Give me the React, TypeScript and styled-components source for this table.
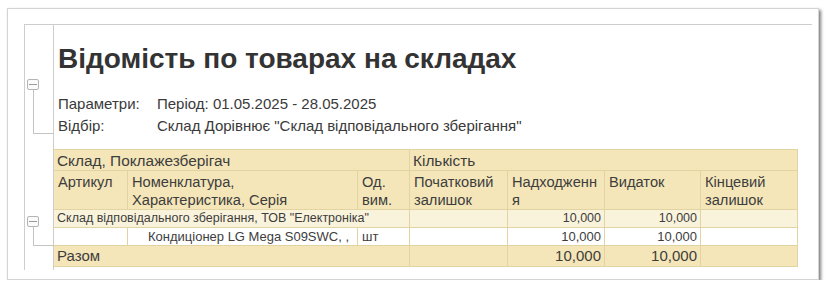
import React from "react";
import styled, { createGlobalStyle } from "styled-components";

const Global = createGlobalStyle`
  html, body { margin: 0; padding: 0; background: #ffffff; }
  body { font-family: "Liberation Sans", Arial, sans-serif; color: #3a3a3a; }
`;

const Card = styled.div`
  box-sizing: border-box;
  margin: 8px 0 0 7px;
  width: 812px;
  height: 272px;
  background: #fff;
  border: 1px solid #d4d4d4;
  box-shadow: 2px 2px 3px rgba(0, 0, 0, 0.5);
  padding: 15px 6px 9px 16px;
`;

const Sheet = styled.div`
  display: grid;
  grid-template-columns: 29px 74px 230px 52px 98px 97px 96px 97px 1fr;
  grid-template-rows: 54px 70px 22px 39px 18px 18px 21px 1fr;
  height: 100%;
  border-top: 1px solid #cdcdcd;
  border-left: 1px solid #cdcdcd;
  box-sizing: border-box;
`;

const GutterLine = styled.div`
  grid-column: 1;
  grid-row: 1 / -1;
  border-right: 1px solid #cdcdcd;
`;

const Tree = styled.div<{ $row: string; $top: number; $bottom: number }>`
  grid-column: 1;
  grid-row: ${(p) => p.$row};
  display: flex;
  flex-direction: column;
  padding: ${(p) => p.$top}px 0 ${(p) => p.$bottom}px 2px;
`;

const Toggle = styled.div`
  box-sizing: border-box;
  width: 12px;
  height: 11px;
  border: 1px solid #b4b4b4;
  border-radius: 2px;
  background: #fbfbfb;
  display: flex;
  align-items: center;
  justify-content: center;
  &::after {
    content: "";
    width: 8px;
    height: 1px;
    background: #9a9a9a;
  }
`;

const Stem = styled.div`
  flex: 1;
  margin-left: 6px;
  border-left: 1px solid #c4c4c4;
  border-bottom: 1px solid #c4c4c4;
`;

const Title = styled.h1`
  grid-column: 2 / -1;
  grid-row: 1;
  margin: 0;
  padding: 19px 0 0 4px;
  font-size: 28px;
  line-height: 30px;
  font-weight: bold;
  color: #333333;
  white-space: nowrap;
`;

const Params = styled.div`
  grid-column: 2 / -1;
  grid-row: 2;
  padding: 14px 0 0 4px;
`;

const ParamRow = styled.div`
  display: grid;
  grid-template-columns: 99px 1fr;
  height: 22px;
  line-height: 22px;
  font-size: 15px;
  color: #3a3a3a;
  white-space: nowrap;
`;

type Tone = "head" | "subhead" | "group" | "item" | "total";

const bgFor: Record<Tone, string> = {
  head: "#f4e6b9",
  subhead: "#f4e6b9",
  group: "#faf3dc",
  item: "#ffffff",
  total: "#f4e6b9",
};

const fontFor: Record<Tone, string> = {
  head: "15.4px",
  subhead: "14.67px",
  group: "12.5px",
  item: "13px",
  total: "15px",
};

const lineFor: Record<Tone, number> = {
  head: 17,
  subhead: 18,
  group: 17,
  item: 17,
  total: 20,
};

const Cell = styled.div<{
  $tone: Tone;
  $span?: number;
  $right?: boolean;
  $top?: boolean;
  $indent?: number;
}>`
  box-sizing: border-box;
  grid-column: span ${(p) => p.$span ?? 1};
  background: ${(p) => bgFor[p.$tone]};
  border-right: 1px solid #e2d4a2;
  border-bottom: 1px solid #e2d4a2;
  border-top: ${(p) => (p.$top ? "1px solid #e2d4a2" : "none")};
  font-size: ${(p) => fontFor[p.$tone]};
  line-height: ${(p) => lineFor[p.$tone]}px;
  padding: ${(p) => (p.$tone === "head" || p.$tone === "subhead" ? "2px" : "0")}
    ${(p) => (p.$right ? 3 : 0)}px 0 ${(p) => (p.$right ? 0 : p.$indent ?? 3)}px;
  text-align: ${(p) => (p.$right ? "right" : "left")};
  color: #3d3d3d;
  white-space: nowrap;
`;

const Filler = styled.div`
  grid-column: 9;
`;

export default function App() {
  return (
    <>
      <Global />
      <Card>
        <Sheet>
          <GutterLine />
          <Title>Відомість по товарах на складах</Title>

          <Tree $row="2" $top={0} $bottom={15}>
            <Toggle />
            <Stem />
          </Tree>
          <Params>
            <ParamRow>
              <span>Параметри:</span>
              <span>Період: 01.05.2025 - 28.05.2025</span>
            </ParamRow>
            <ParamRow>
              <span>Відбір:</span>
              <span>Склад Дорівнює "Склад відповідального зберігання"</span>
            </ParamRow>
          </Params>

          <Tree $row="5 / span 2" $top={6} $bottom={0}>
            <Toggle />
            <Stem />
          </Tree>

          <Cell $tone="head" $span={3} $top>
            Склад, Поклажезберігач
          </Cell>
          <Cell $tone="head" $span={4} $top>
            Кількість
          </Cell>
          <Filler />

          <Cell $tone="subhead" $indent={4}>Артикул</Cell>
          <Cell $tone="subhead" $indent={4}>
            Номенклатура,
            <br />
            Характеристика, Серія
          </Cell>
          <Cell $tone="subhead" $indent={4}>
            Од.
            <br />
            вим.
          </Cell>
          <Cell $tone="subhead" $indent={4}>
            Початковий
            <br />
            залишок
          </Cell>
          <Cell $tone="subhead" $indent={4}>
            Надходженн
            <br />я
          </Cell>
          <Cell $tone="subhead" $indent={4}>Видаток</Cell>
          <Cell $tone="subhead" $indent={4}>
            Кінцевий
            <br />
            залишок
          </Cell>
          <Filler />

          <Cell $tone="group" $span={3}>
            Склад відповідального зберігання, ТОВ "Електроніка"
          </Cell>
          <Cell $tone="group" />
          <Cell $tone="group" $right>10,000</Cell>
          <Cell $tone="group" $right>10,000</Cell>
          <Cell $tone="group" />
          <Filler />

          <Cell $tone="item" />
          <Cell $tone="item" $indent={20}>Кондиціонер LG Mega S09SWC, ,</Cell>
          <Cell $tone="item" $indent={4}>шт</Cell>
          <Cell $tone="item" />
          <Cell $tone="item" $right>10,000</Cell>
          <Cell $tone="item" $right>10,000</Cell>
          <Cell $tone="item" />
          <Filler />

          <Cell $tone="total" $span={3}>Разом</Cell>
          <Cell $tone="total" />
          <Cell $tone="total" $right>10,000</Cell>
          <Cell $tone="total" $right>10,000</Cell>
          <Cell $tone="total" />
          <Filler />
        </Sheet>
      </Card>
    </>
  );
}
